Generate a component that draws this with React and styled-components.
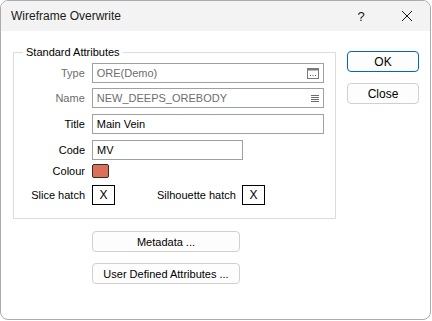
import React from "react";
import styled, { createGlobalStyle } from "styled-components";

const GlobalStyle = createGlobalStyle`
  html, body {
    margin: 0;
    padding: 0;
    background: #ffffff;
  }
  body {
    font-family: "Liberation Sans", Arial, sans-serif;
    font-size: 11px;
    color: #000;
  }
`;

//Window frame
const Window = styled.div`
  width: 431px;
  height: 320px;
  box-sizing: border-box;
  border: 1px solid #ababab;
  border-radius: 8px;
  overflow: hidden;
  background: #ffffff;
  display: flex;
  flex-direction: column;
`;

const TitleBar = styled.div`
  height: 30px;
  background: #f3f3f3;
  display: flex;
  align-items: center;
  padding-left: 10px;
  font-family: "Liberation Sans", Arial, sans-serif;
  font-size: 12px;
  color: #1a1a1a;
`;

const TitleText = styled.span`
  flex: 1;
  margin-top: -1px;
`;

const TitleButton = styled.span`
  width: 46px;
  height: 30px;
  display: flex;
  align-items: center;
  justify-content: center;
  font-size: 13px;
  color: #1a1a1a;
`;

const Body = styled.div`
  flex: 1;
  display: flex;
  padding: 14px 12px 0 12px;
`;

const LeftColumn = styled.div`
  display: flex;
  flex-direction: column;
`;

const RightColumn = styled.div`
  display: flex;
  flex-direction: column;
  gap: 11px;
  margin-top: 6px;
  margin-left: 11px;
`;

//Group box
const Group = styled.fieldset`
  margin: 0;
  width: 323px;
  box-sizing: border-box;
  min-width: 0;
  border: 1px solid #dcdcdc;
  padding: 4px 11px 13px 0;
  display: flex;
  flex-direction: column;
`;

const Legend = styled.legend`
  margin-left: 9px;
  padding: 0 3px;
  line-height: 14px;
`;

const Row = styled.div`
  display: flex;
  align-items: center;
  height: ${(p) => p.$h || 20}px;
  margin-top: ${(p) => p.$top || 0}px;
`;

const Label = styled.span`
  width: 71px;
  text-align: right;
  margin-right: 7px;
  color: ${(p) => (p.$disabled ? "#6d6d6d" : "#000")};
  white-space: nowrap;
`;

const Input = styled.div`
  height: 20px;
  box-sizing: border-box;
  width: ${(p) => p.$w || 233}px;
  border: 1px solid #a0a0a0;
  display: flex;
  align-items: center;
  padding: 0 4px;
  color: ${(p) => (p.$disabled ? "#6d6d6d" : "#000")};
`;

const InputText = styled.span`
  flex: 1;
`;

const Swatch = styled.div`
  width: 17px;
  height: 14px;
  box-sizing: border-box;
  border: 1px solid #3a2a26;
  border-radius: 2px;
  background: #d9705a;
`;

const HatchBox = styled.div`
  width: 23px;
  height: 20px;
  box-sizing: border-box;
  border: 1px solid #000;
  display: flex;
  align-items: center;
  justify-content: center;
  font-size: 12px;
`;

const HatchLabel = styled.span`
  margin-left: 42px;
  margin-right: 6px;
`;

const Button = styled.div`
  width: ${(p) => p.$w || 72}px;
  height: 21px;
  box-sizing: border-box;
  border: 1px solid ${(p) => (p.$primary ? "#0067c0" : "#d0d0d0")};
  border-radius: 4px;
  background: #fdfdfd;
  display: flex;
  align-items: center;
  justify-content: center;
  font-size: ${(p) => p.$fs || 12}px;
`;

const BottomButtons = styled.div`
  display: flex;
  flex-direction: column;
  gap: 11px;
  margin: 12px 0 0 79px;
`;

const CloseIcon = () => (
  <svg width="12" height="12" viewBox="0 0 12 12">
    <path d="M1 1L11 11M11 1L1 11" stroke="#1a1a1a" strokeWidth="1" />
  </svg>
);

const BrowseIcon = () => (
  <svg width="12" height="11" viewBox="0 0 12 11">
    <rect x="0.5" y="0.5" width="11" height="10" fill="none" stroke="#7a7a7a" />
    <rect x="0.5" y="0.5" width="11" height="2" fill="#7a7a7a" />
    <rect x="3" y="7" width="1" height="1" fill="#555" />
    <rect x="5.5" y="7" width="1" height="1" fill="#555" />
    <rect x="8" y="7" width="1" height="1" fill="#555" />
  </svg>
);

const ListIcon = () => (
  <svg width="8" height="8" viewBox="0 0 8 8">
    <path d="M0 1.5H8M0 3.5H8M0 5.5H8M0 7.5H8" stroke="#6d6d6d" strokeWidth="1" />
  </svg>
);

export default function App() {
  return (
    <>
      <GlobalStyle />
      <Window>
        <TitleBar>
          <TitleText>Wireframe Overwrite</TitleText>
          <TitleButton>?</TitleButton>
          <TitleButton>
            <CloseIcon />
          </TitleButton>
        </TitleBar>
        <Body>
          <LeftColumn>
            <Group>
              <Legend>Standard Attributes</Legend>
              <Row>
                <Label $disabled>Type</Label>
                <Input $disabled>
                  <InputText>ORE(Demo)</InputText>
                  <BrowseIcon />
                </Input>
              </Row>
              <Row $top={5}>
                <Label $disabled>Name</Label>
                <Input $disabled>
                  <InputText>NEW_DEEPS_OREBODY</InputText>
                  <ListIcon />
                </Input>
              </Row>
              <Row $top={6}>
                <Label>Title</Label>
                <Input>Main Vein</Input>
              </Row>
              <Row $top={6}>
                <Label>Code</Label>
                <Input $w={151}>MV</Input>
              </Row>
              <Row $top={4} $h={14}>
                <Label>Colour</Label>
                <Swatch />
              </Row>
              <Row $top={7}>
                <Label>Slice hatch</Label>
                <HatchBox>X</HatchBox>
                <HatchLabel>Silhouette hatch</HatchLabel>
                <HatchBox>X</HatchBox>
              </Row>
            </Group>
            <BottomButtons>
              <Button $w={148} $fs={11}>Metadata ...</Button>
              <Button $w={148} $fs={11}>User Defined Attributes ...</Button>
            </BottomButtons>
          </LeftColumn>
          <RightColumn>
            <Button $primary>OK</Button>
            <Button>Close</Button>
          </RightColumn>
        </Body>
      </Window>
    </>
  );
}
